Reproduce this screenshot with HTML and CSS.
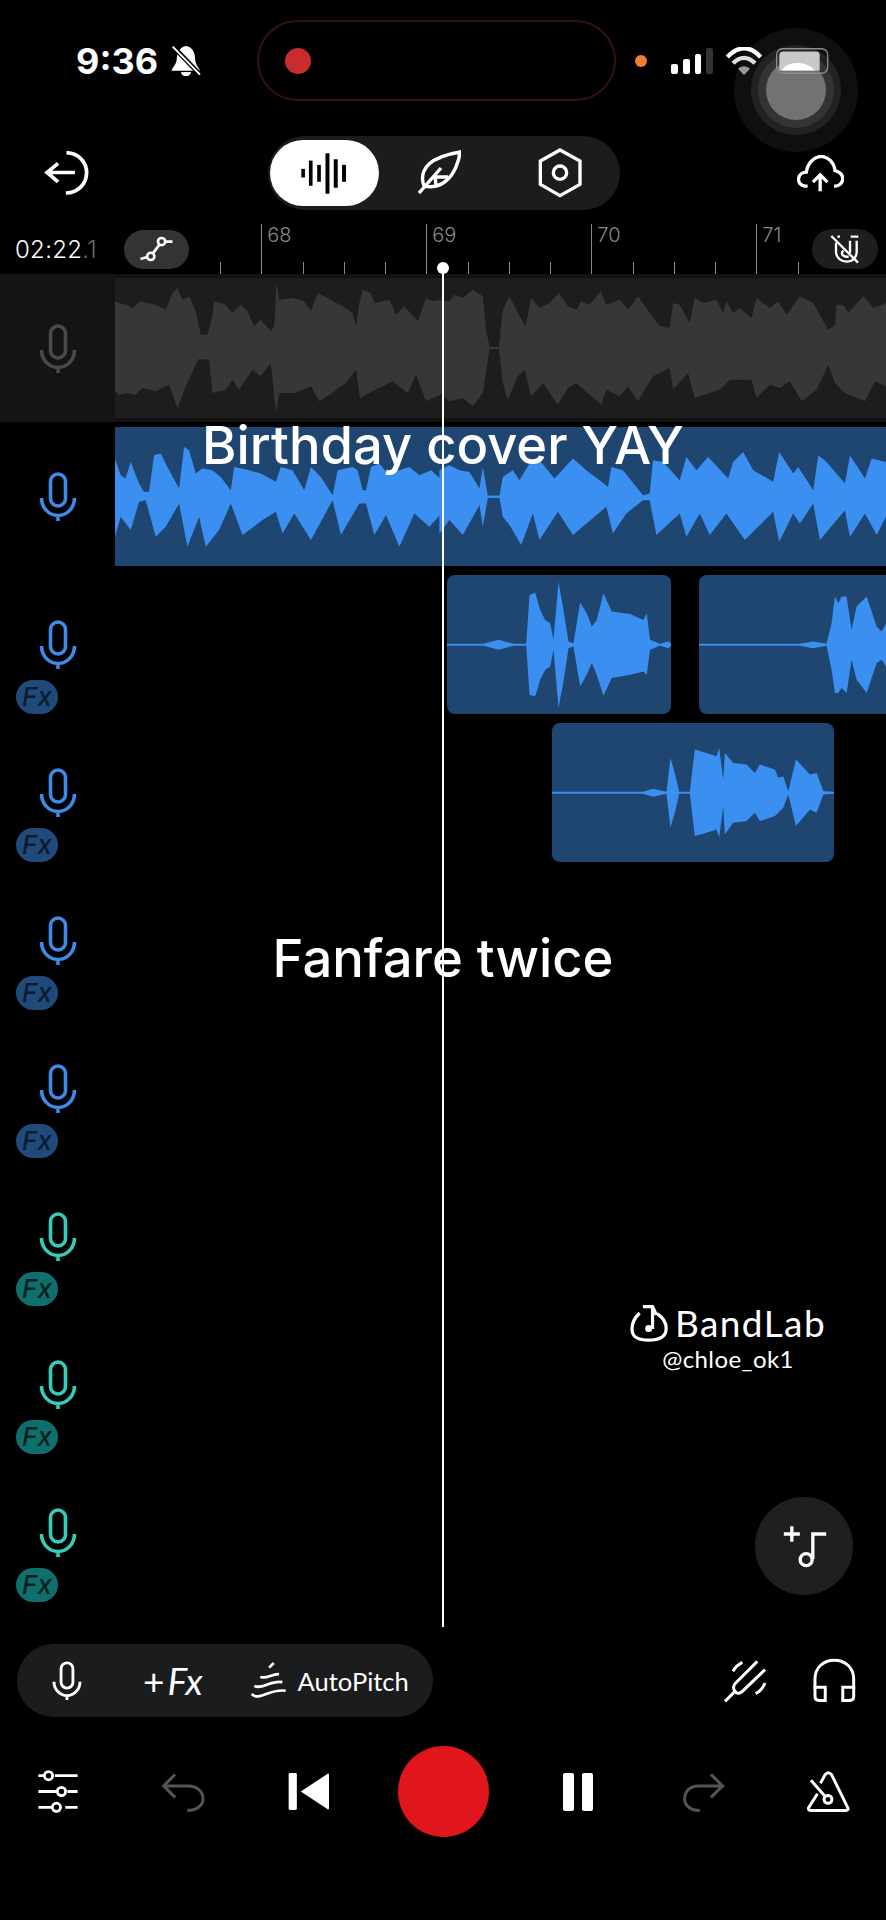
FILE: index.html
```html
<!DOCTYPE html>
<html lang="en">
<head>
    <meta charset="UTF-8">
    <meta name="viewport" content="width=device-width, initial-scale=1.0">
    <title>studio</title>
    <link rel="stylesheet" href="styles.css">
</head>
<body>
<svg class="defs">
    <symbol id="mic" viewBox="0 0 38 50">
        <rect x="11.5" y="2" width="15" height="32" rx="7.5" fill="none" stroke="currentColor" stroke-width="3.6"/>
        <path d="M2.5 26a16.500 17.500 0 0 0 33 0M19 43v6" fill="none" stroke="currentColor" stroke-width="3.6"/>
    </symbol>
</svg>

<div class="app">
    <!-- status bar -->
    <header class="status">
        <span class="clock">9:36</span>
        <svg class="bell" viewBox="513 135 90 93">
            <path d="M558 138C540 140 530 160 530 180C528 195 518 200 515 212H600C595 200 586 195 585 175C585 155 575 140 558 138Z" fill="#fff"/>
            <path d="M543 216a15 13 0 0 0 30 0Z" fill="#fff"/>
            <path d="M516 136L602 226" stroke="#000" stroke-width="14"/>
            <path d="M518 140L600 224" stroke="#fff" stroke-width="6"/>
        </svg>
        <div class="island"><span class="rec-dot"></span></div>
        <span class="mic-dot"></span>
        <div class="signal">
            <span class="bar bar-1"></span>
            <span class="bar bar-2"></span>
            <span class="bar bar-3"></span>
            <span class="bar bar-4"></span>
        </div>
        <svg class="wifi" viewBox="848 135 108 84">
            <path d="M852 165C885 130 920 130 952 165" fill="none" stroke="#fff" stroke-width="13"/>
            <path d="M869 184C890 162 914 162 935 184" fill="none" stroke="#ddd" stroke-width="13"/>
            <path d="M884 200C895 190 909 190 920 200L902 219Z" fill="#999"/>
        </svg>
        <svg class="battery" viewBox="1000 138 160 78">
            <rect x="1002" y="140" width="154" height="74" rx="18" fill="none" stroke="#8c8c8c" stroke-width="4"/>
            <path d="M1010 160Q1010 148 1022 148H1122Q1132 148 1132 160V206H1010Z" fill="#c8c8c8"/>
            <path d="M1018 206C1030 175 1095 175 1118 206Z" fill="#fff"/>
        </svg>
    </header>

    <!-- top toolbar -->
    <nav class="toolbar">
        <svg class="icon-back" viewBox="130 450 140 140" fill="none" stroke="#fff" stroke-width="11">
            <path d="M175 490L142 517L175 545M142 517H225M200 458C240 460 260 490 260 517C260 550 235 578 198 578"/>
        </svg>
        <div class="view-tabs">
            <span class="tab tab-active">
                <svg class="icon-bars" viewBox="905 455 145 128" fill="#000">
                    <rect x="909" y="505" width="11" height="26"/>
                    <rect x="932" y="480" width="11" height="76"/>
                    <rect x="957" y="493" width="11" height="51"/>
                    <rect x="982" y="458" width="12" height="122"/>
                    <rect x="1007" y="476" width="12" height="86"/>
                    <rect x="1032" y="493" width="12" height="51"/>
                </svg>
            </span>
            <span class="tab">
                <svg class="icon-feather" viewBox="0 0 44 44" fill="none" stroke="#fff" stroke-width="3.400">
                    <path d="M2 43L24 18M7 36C4 28 6 20 12 14C20 7 31 4 43 2C42 12 37 24 30 30C24 36 15 38 7 36ZM18 26L19 35M19 27H31"/>
                </svg>
            </span>
            <span class="tab">
                <svg class="icon-hex" viewBox="290 445 132 148" fill="none" stroke="#fff" stroke-width="10">
                    <path d="M356 450L416 483V553L356 587L297 553V483Z"/>
                    <circle cx="356" cy="518" r="20"/>
                </svg>
            </span>
        </div>
        <svg class="icon-upload" viewBox="1060 458 142 112" fill="none" stroke="#fff" stroke-width="10">
            <path d="M1092 552H1085C1070 552 1063 540 1065 528C1067 516 1078 510 1088 510C1092 480 1115 462 1135 462C1155 465 1172 480 1175 505C1190 508 1200 520 1198 532C1197 545 1185 553 1172 552"/>
            <path d="M1130 568V520M1108 540L1130 518L1152 540"/>
        </svg>
    </nav>

    <!-- time ruler -->
    <div class="ruler">
        <span class="time">02:22<span class="time-tenth">.1</span></span>
        <span class="auto-btn">
            <svg class="icon-nodes" viewBox="420 705 105 85" fill="none" stroke="#fff" stroke-width="8">
                <circle cx="455" cy="770" r="11"/>
                <circle cx="488" cy="725" r="11"/>
                <path d="M462 760L481 735M424 778L444 772M499 725H521"/>
            </svg>
        </span>
        <div class="ticks">
            <span class="tick"></span>
            <span class="tick major">68</span>
            <span class="tick"></span>
            <span class="tick"></span>
            <span class="tick"></span>
            <span class="tick major">69</span>
            <span class="tick"></span>
            <span class="tick"></span>
            <span class="tick"></span>
            <span class="tick major">70</span>
            <span class="tick"></span>
            <span class="tick"></span>
            <span class="tick"></span>
            <span class="tick major">71</span>
            <span class="tick"></span>
        </div>
        <span class="magnet-btn">
            <svg class="icon-magnet" viewBox="1160 702 90 90" fill="none" stroke="#fff" stroke-width="7">
                <path d="M1178 728V755C1178 775 1195 785 1210 785C1228 785 1240 772 1240 755V722M1220 722V760M1200 752C1190 762 1200 772 1216 770M1222 710H1245M1182 710H1190"/>
                <path d="M1164 708L1244 788"/>
            </svg>
        </span>
    </div>

    <!-- tracks -->
    <section class="tracks">
        <div class="track track-muted">
            <div class="track-head"><svg class="mic"><use href="#mic"/></svg></div>
            <div class="lane">
                <svg class="clip-full clip-grey" viewBox="348 25 2310 420" preserveAspectRatio="none">
                    <g class="wave">
                        <polygon points="348,237 348,95 360,100 380,105 400,115 425,95 445,100 470,105 500,120 520,70 535,55 550,90 570,80 590,125 605,195 625,195 640,140 645,95 680,105 700,130 725,105 745,125 765,170 785,150 815,185 825,170 832,40 840,90 880,85 915,95 935,125 955,70 985,85 1030,110 1060,130 1070,170 1080,100 1090,60 1115,70 1125,100 1170,90 1190,135 1215,110 1255,155 1280,85 1300,95 1322,90 1322,237"/>
                        <polygon points="348,233 348,365 360,375 385,370 410,375 430,355 470,365 510,345 535,415 560,350 590,285 600,268 630,270 640,370 680,360 700,330 720,360 760,300 785,320 815,280 830,430 840,370 890,370 935,350 960,395 990,375 1040,340 1070,300 1082,385 1110,370 1180,335 1225,370 1250,315 1280,395 1322,375 1322,233"/>
                        <g transform="translate(1320 0)">
                            <polygon points="0,235 0,90 30,95 45,75 70,85 100,60 130,80 140,180 150,232 178,232 190,120 210,80 230,120 258,170 275,85 300,115 330,100 358,70 385,110 410,120 425,95 450,105 483,65 500,105 540,90 565,120 595,80 630,130 660,170 690,175 700,100 720,105 750,160 765,85 790,100 830,90 850,130 860,95 880,130 900,115 935,145 950,85 990,115 1015,95 1040,135 1080,80 1120,100 1165,180 1185,165 1190,105 1210,105 1225,130 1270,80 1300,115 1338,100 1338,235"/>
                            <polygon points="0,235 0,370 30,395 70,385 100,410 130,370 150,238 178,238 190,340 205,390 235,320 255,300 275,380 310,340 355,405 385,355 410,340 450,375 485,405 500,360 540,380 565,350 595,395 640,320 690,295 700,360 745,310 765,385 840,360 870,330 935,330 950,385 990,345 1020,355 1050,335 1085,395 1130,360 1165,285 1185,340 1215,370 1275,395 1305,335 1338,350 1338,235"/>
                        </g>
                    </g>
                </svg>
            </div>
        </div>

        <div class="track track-blue">
            <div class="track-head"><svg class="mic"><use href="#mic"/></svg></div>
            <div class="lane">
                <svg class="clip-full clip-blue" viewBox="348 470 2310 418" preserveAspectRatio="none">
                    <g class="wave">
                        <polygon points="348,683 348,565 365,615 380,625 395,575 420,640 435,665 450,665 465,555 485,550 505,590 540,655 555,530 570,540 590,610 610,595 640,600 665,620 695,660 705,590 750,600 785,610 830,635 845,590 880,600 915,660 935,590 965,620 1000,675 1015,600 1060,590 1075,600 1090,660 1100,660 1115,590 1140,580 1165,610 1200,600 1230,590 1260,615 1295,600 1322,625 1322,683"/>
                        <polygon points="348,677 348,800 365,740 395,780 420,695 440,690 470,800 500,770 540,700 565,830 600,740 620,830 660,780 695,700 730,795 790,750 830,725 850,790 885,730 935,810 1000,690 1025,795 1080,700 1100,700 1125,795 1160,735 1200,830 1245,730 1290,770 1322,735 1322,677"/>
                        <g transform="translate(1320 0)">
                            <polygon points="0,683 0,600 30,585 60,600 90,605 120,655 130,590 145,677 180,677 190,620 220,600 240,630 270,580 300,570 345,625 400,565 440,600 505,650 515,590 550,600 610,675 630,670 640,570 670,575 720,630 740,560 770,600 805,560 865,625 880,575 910,545 940,600 1000,635 1018,545 1060,610 1075,590 1120,660 1135,555 1160,575 1215,640 1230,555 1275,625 1295,565 1338,575 1338,683"/>
                            <polygon points="0,677 0,790 30,750 70,795 120,705 130,770 145,683 180,683 190,740 210,765 245,825 280,730 300,810 355,725 400,795 500,710 520,790 560,730 610,690 630,690 650,795 720,730 740,800 780,730 810,795 860,730 915,810 1000,725 1018,815 1060,730 1080,760 1120,700 1140,810 1215,720 1230,800 1275,730 1310,795 1338,740 1338,677"/>
                        </g>
                    </g>
                </svg>
            </div>
        </div>

        <div class="track track-blue">
            <div class="track-head">
                <svg class="mic"><use href="#mic"/></svg>
                <span class="fx">Fx</span>
            </div>
            <div class="lane">
                <svg class="clip clip-a" viewBox="50 45 673 418" preserveAspectRatio="none">
                    <polygon class="wave" points="50,252 160,252 205,240 250,252 288,252 298,105 315,98 330,150 345,180 360,190 370,240 385,65 400,150 415,245 430,250 450,128 470,160 485,200 500,180 520,100 545,155 600,162 640,180 650,160 660,240 690,252 715,245 723,252 723,258 715,265 690,258 660,270 650,345 640,335 600,345 545,355 520,408 500,345 485,310 470,345 450,380 430,260 415,265 400,365 385,445 370,270 360,320 345,330 330,360 315,410 298,405 288,258 250,258 205,270 160,258 50,258"/>
                </svg>
                <svg class="clip clip-b" viewBox="808 45 560 418" preserveAspectRatio="none">
                    <polygon class="wave" points="808,252 1110,252 1150,245 1190,252 1205,190 1215,110 1225,130 1235,110 1250,110 1265,210 1280,140 1310,110 1340,200 1355,215 1368,190 1368,320 1355,300 1340,310 1310,400 1280,360 1265,300 1250,400 1235,385 1225,400 1215,400 1205,330 1190,258 1150,265 1110,258 808,258"/>
                </svg>
            </div>
        </div>

        <div class="track track-blue">
            <div class="track-head">
                <svg class="mic"><use href="#mic"/></svg>
                <span class="fx">Fx</span>
            </div>
            <div class="lane">
                <svg class="clip clip-c" viewBox="367 490 845 418" preserveAspectRatio="none">
                    <polygon class="wave" points="367,697 640,697 670,688 710,697 722,595 735,640 748,697 780,697 795,570 830,580 860,590 868,565 880,660 885,580 910,610 950,615 975,640 990,615 1035,630 1045,655 1060,650 1075,695 1098,600 1140,645 1160,640 1180,695 1212,697 1212,703 1180,705 1160,760 1140,750 1098,800 1075,705 1060,745 1035,770 990,785 975,760 950,785 910,790 885,825 880,740 868,835 860,810 830,820 795,830 780,703 748,703 735,760 722,805 710,703 670,712 640,703 367,703"/>
                </svg>
            </div>
        </div>

        <div class="track track-blue">
            <div class="track-head">
                <svg class="mic"><use href="#mic"/></svg>
                <span class="fx">Fx</span>
            </div>
            <div class="lane"></div>
        </div>
        <div class="track track-blue">
            <div class="track-head">
                <svg class="mic"><use href="#mic"/></svg>
                <span class="fx">Fx</span>
            </div>
            <div class="lane"></div>
        </div>
        <div class="track track-teal">
            <div class="track-head">
                <svg class="mic"><use href="#mic"/></svg>
                <span class="fx">Fx</span>
            </div>
            <div class="lane"></div>
        </div>
        <div class="track track-teal">
            <div class="track-head">
                <svg class="mic"><use href="#mic"/></svg>
                <span class="fx">Fx</span>
            </div>
            <div class="lane"></div>
        </div>
        <div class="track track-teal">
            <div class="track-head">
                <svg class="mic"><use href="#mic"/></svg>
                <span class="fx">Fx</span>
            </div>
            <div class="lane"></div>
        </div>
    </section>

    <!-- bottom controls -->
    <div class="tools">
        <div class="tools-pill">
            <svg class="tools-mic"><use href="#mic"/></svg>
            <span class="add-fx">+<em>Fx</em></span>
            <span class="autopitch">
                <svg class="icon-pitch" viewBox="748 122 110 118" fill="none" stroke="#fff" stroke-width="8">
                    <path d="M752 222C775 245 805 205 855 212M760 197C780 210 810 180 845 186M778 170C795 178 815 160 835 162M805 142L819 128"/>
                </svg>
                AutoPitch
            </span>
        </div>
        <svg class="icon-fork" viewBox="842 118 132 132" fill="none" stroke="#fff" stroke-width="9">
            <path d="M848 245L878 215C885 225 895 220 900 215L968 150M878 215C870 205 875 195 880 190L945 125M872 155C878 143 888 134 900 128M940 222C952 216 962 205 968 190"/>
        </svg>
        <svg class="icon-phones" viewBox="1118 112 130 135" fill="none" stroke="#fff" stroke-width="9">
            <path d="M1124 205V175C1124 140 1150 118 1182 118C1215 118 1241 140 1241 175V205"/>
            <path d="M1124 200H1155V240H1136Q1124 240 1124 228ZM1241 200H1208V240H1229Q1241 240 1241 228Z"/>
        </svg>
    </div>

    <div class="transport">
        <svg class="icon-sliders" viewBox="108 448 134 136" fill="none" stroke="#fff" stroke-width="9">
            <circle cx="145" cy="466" r="13"/>
            <circle cx="186" cy="516" r="13"/>
            <circle cx="170" cy="566" r="13"/>
            <path d="M113 466H132M165 466H237M113 516H172M205 516H237M113 566H156M198 566H237"/>
        </svg>
        <svg class="icon-undo" viewBox="482 452 134 130" fill="none" stroke="#555" stroke-width="9">
            <path d="M525 465L490 500L525 535M490 500H565C595 500 610 520 610 540C610 560 590 575 562 575"/>
        </svg>
        <svg class="icon-prev" viewBox="860 455 134 122" fill="#fff">
            <rect x="865" y="460" width="25" height="112" rx="4"/>
            <path d="M902 516L984 462Q988 460 988 466V566Q988 572 984 570Z"/>
        </svg>
        <span class="record"></span>
        <div class="pause"><span></span><span></span></div>
        <svg class="icon-redo" viewBox="714 452 134 130" fill="none" stroke="#555" stroke-width="9">
            <path d="M802 465L838 500L802 535M838 500H764C735 500 722 520 722 540C722 560 740 575 768 575"/>
        </svg>
        <svg class="icon-metro" viewBox="1090 452 134 130" fill="none" stroke="#fff" stroke-width="9">
            <path d="M1125 524L1098 566Q1095 575 1106 575H1210Q1222 575 1216 564L1168 466Q1158 454 1148 466L1134 492"/>
            <path d="M1105 483L1150 534"/>
            <circle cx="1157" cy="541" r="12"/>
        </svg>
    </div>

    <!-- things that sit over the page -->
    <div class="touch-btn"></div>
    <div class="playhead"></div>
    <p class="caption caption-top">Birthday cover YAY</p>
    <p class="caption caption-mid">Fanfare twice</p>

    <div class="watermark">
        <div class="brand">
            <svg class="brand-logo" viewBox="88 70 118 118" fill="none" stroke="#fff" stroke-width="10">
                <path d="M118 98C100 115 92 135 95 155C98 175 115 182 145 182C175 182 198 175 200 150C202 130 190 112 172 100"/>
                <path d="M128 78H158L170 104M158 78V148"/>
                <circle cx="146" cy="146" r="11" fill="#fff" stroke="none"/>
            </svg>
            <span>BandLab</span>
        </div>
        <span class="handle">@chloe_ok1</span>
    </div>

    <button class="add-track">
        <svg class="icon-addnote" viewBox="540 725 140 135" fill="none" stroke="#fff" stroke-width="10">
            <path d="M548 755H596M572 732V778M635 830V755H675"/>
            <circle cx="615" cy="832" r="18"/>
        </svg>
    </button>
</div>
</body>
</html>
```

FILE: styles.css
```css
/* page */
body {
  margin: 0;
  background-color: #000;
  font-family: Inter, "Liberation Sans", sans-serif;
  color: #fff;
}

.defs {
  display: none;
}

.app {
  position: relative;
  width: 886px;
  height: 1920px;
  overflow: hidden;
}

/* status bar */
.status {
  display: flex;
  align-items: center;
  height: 81px;
  margin-top: 0;
  padding: 20px 0 0 76px;
}

.clock {
  width: 85px;
  font-size: 36px;
  font-weight: 700;
  white-space: nowrap;
}

.bell {
  width: 30px;
  height: 31px;
  margin-left: 10px;
}

.island {
  display: flex;
  align-items: center;
  box-sizing: border-box;
  width: 359px;
  height: 81px;
  margin-left: 56px;
  padding-left: 26px;
  border: 2px solid #33101c;
  border-radius: 41px;
}

.rec-dot {
  width: 26px;
  height: 26px;
  border-radius: 50%;
  background-color: #c92c2c;
}

.mic-dot {
  width: 12px;
  height: 12px;
  margin-left: 19px;
  border-radius: 50%;
  background-color: #f08030;
}

.signal {
  display: flex;
  align-items: flex-end;
  gap: 5px;
  width: 42px;
  height: 26px;
  margin-left: 24px;
}

.bar {
  width: 7px;
  border-radius: 2px;
  background-color: #fff;
}

.bar-1 { height: 10px; }
.bar-2 { height: 15px; }
.bar-3 { height: 20px; }
.bar-4 { height: 26px; background-color: #333; }

.wifi {
  position: relative;
  z-index: 2;
  width: 36px;
  height: 28px;
  margin-left: 13px;
}

.battery {
  position: relative;
  z-index: 2;
  width: 53px;
  height: 26px;
  margin-left: 14px;
}

/* top toolbar */
.toolbar {
  display: flex;
  align-items: center;
  height: 74px;
  margin-top: 35px;
  padding-left: 43px;
}

.icon-back {
  width: 47px;
  height: 47px;
}

.view-tabs {
  display: flex;
  align-items: center;
  box-sizing: border-box;
  width: 352px;
  height: 74px;
  margin-left: 178px;
  padding-left: 2px;
  border-radius: 37px;
  background-color: #1b1c1e;
}

.tab {
  display: flex;
  align-items: center;
  justify-content: center;
  width: 122px;
  height: 66px;
}

.tab-active {
  width: 110px;
  border-radius: 33px;
  background-color: #fff;
}

.icon-bars {
  width: 48px;
  height: 43px;
}

.icon-feather {
  width: 44px;
  height: 44px;
  margin-top: -3px;
}

.icon-hex {
  width: 44px;
  height: 50px;
}

.icon-upload {
  width: 47px;
  height: 37px;
  margin-left: 177px;
}

/* ruler */
.ruler {
  position: relative;
  display: flex;
  align-items: center;
  height: 50px;
  margin-top: 14px;
  overflow: hidden;
}

.time {
  width: 109px;
  padding-left: 15px;
  font-size: 24px;
  font-weight: 300;
  letter-spacing: 0.3px;
  white-space: nowrap;
}

.time-tenth {
  color: #666;
}

.auto-btn {
  display: flex;
  align-items: center;
  justify-content: center;
  width: 65px;
  height: 39px;
  border-radius: 20px;
  background-color: #333;
}

.icon-nodes {
  width: 35px;
  height: 28px;
}

.ticks {
  display: flex;
  align-items: flex-end;
  align-self: stretch;
  margin-left: 31px;
}

.tick {
  flex: 0 0 41.25px;
  box-sizing: border-box;
  height: 12px;
  border-left: 1px solid #888;
}

.tick.major {
  height: 50px;
  padding-left: 5px;
  color: #8a8a8a;
  font-size: 20px;
  font-weight: 300;
  line-height: 22px;
}

.magnet-btn {
  position: absolute;
  top: 5px;
  left: 812px;
  display: flex;
  align-items: center;
  justify-content: center;
  width: 66px;
  height: 40px;
  border-radius: 20px;
  background-color: #1d1e20;
}

.icon-magnet {
  width: 30px;
  height: 30px;
}

/* tracks */
.track {
  display: flex;
  height: 148px;
}

.track-muted { color: #4a4a4a; background-color: #111; }
.track-blue { color: #3f8ae6; }
.track-teal { color: #35cdb8; }

.track-head {
  display: flex;
  flex-direction: column;
  flex: 0 0 115px;
  box-sizing: border-box;
  padding: 50px 0 0 16px;
}

.track-muted .track-head {
  background-color: #141414;
}

.mic {
  width: 38px;
  height: 50px;
  margin-left: 23px;
}

.fx {
  width: 42px;
  height: 34px;
  margin-top: 10px;
  border-radius: 17px;
  color: #0c1c30;
  background-color: #1f4a7a;
  font-size: 26px;
  font-style: italic;
  font-weight: 500;
  line-height: 33px;
  text-align: center;
}

.track-teal .fx {
  color: #04211f;
  background-color: #0f6f6c;
}

.lane {
  position: relative;
  flex: 1;
}

.clip-full {
  display: block;
  width: 771px;
  height: 139px;
  margin-top: 5px;
}

.clip-grey {
  height: 140px;
  margin-top: 4px;
  background-color: #1d1d1d;
}

.clip-blue {
  background-color: #1f4671;
}

.clip {
  position: absolute;
  top: 5px;
  height: 139px;
  border-radius: 8px;
  background-color: #1f4671;
}

.clip-a { left: 332px; width: 224px; }
.clip-b { left: 584px; width: 187px; border-radius: 8px 0 0 8px; }
.clip-c { left: 437px; width: 282px; }

.wave {
  fill: #3a8ff0;
}

.clip-grey .wave {
  fill: #373737;
}

/* tool row */
.tools {
  display: flex;
  align-items: center;
  height: 73px;
  margin-top: 38px;
  padding-left: 17px;
}

.tools-pill {
  display: flex;
  align-items: center;
  box-sizing: border-box;
  width: 416px;
  height: 73px;
  padding-left: 35px;
  border-radius: 37px;
  background-color: #1b1c1e;
}

.tools-mic {
  width: 30px;
  height: 40px;
  color: #fff;
}

.add-fx {
  margin-left: 61px;
  font-family: Lato, sans-serif;
  font-size: 37px;
  white-space: nowrap;
}

.add-fx em {
  margin-left: 3px;
}

.autopitch {
  display: flex;
  align-items: center;
  margin-left: 47px;
  font-family: Lato, sans-serif;
  font-size: 25.5px;
  white-space: nowrap;
}

.icon-pitch {
  width: 37px;
  height: 39px;
  margin-right: 11px;
}

.icon-fork {
  width: 44px;
  height: 44px;
  margin-left: 290px;
}

.icon-phones {
  width: 43px;
  height: 45px;
  margin-left: 46px;
}

/* transport */
.transport {
  display: grid;
  grid-template-columns: 116px 134px 118px 150px 120px 132px 116px;
  align-items: center;
  justify-items: center;
  height: 91px;
  margin-top: 29px;
}

.icon-sliders,
.icon-undo,
.icon-prev,
.icon-redo,
.icon-metro {
  width: 44px;
  height: 43px;
}

.record {
  width: 91px;
  height: 91px;
  border-radius: 50%;
  background-color: #e0161c;
}

.pause {
  display: flex;
  gap: 8px;
}

.pause span {
  width: 11px;
  height: 38px;
  border-radius: 2px;
  background-color: #fff;
}

/* overlays */
.touch-btn {
  position: absolute;
  top: 60px;
  left: 766px;
  width: 60px;
  height: 60px;
  border-radius: 50%;
  background-color: #727272;
  box-shadow: 0 0 0 8px #343434, 0 0 0 15px #222, 0 0 0 32px #0f0f0f;
}

.playhead {
  position: absolute;
  top: 268px;
  left: 442px;
  width: 2px;
  height: 1359px;
  background-color: #fff;
}

.playhead::before {
  content: "";
  position: absolute;
  top: -6px;
  left: -5px;
  width: 12px;
  height: 12px;
  border-radius: 50%;
  background-color: #fff;
}

.caption {
  position: absolute;
  left: 0;
  width: 886px;
  margin: 0;
  font-size: 52.5px;
  font-weight: 500;
  line-height: 60px;
  text-align: center;
}

.caption-top { top: 415px; }
.caption-mid { top: 928px; }

.watermark {
  position: absolute;
  top: 1301px;
  left: 630px;
  display: flex;
  flex-direction: column;
  align-items: center;
  width: 196px;
}

.brand {
  display: flex;
  align-items: center;
  gap: 7px;
  font-family: Lato, sans-serif;
  font-size: 37px;
  letter-spacing: 1.400px;
  line-height: 44px;
}

.brand-logo {
  width: 38px;
  height: 38px;
}

.handle {
  font-family: Lato, sans-serif;
  font-size: 24px;
  letter-spacing: 0.4px;
  line-height: 28px;
}

.add-track {
  position: absolute;
  top: 1497px;
  left: 755px;
  width: 98px;
  height: 98px;
  padding: 0;
  border: none;
  border-radius: 50%;
  background-color: #1e1f21;
}

.icon-addnote {
  display: block;
  width: 47px;
  height: 45px;
  margin: 0 auto;
}
```
